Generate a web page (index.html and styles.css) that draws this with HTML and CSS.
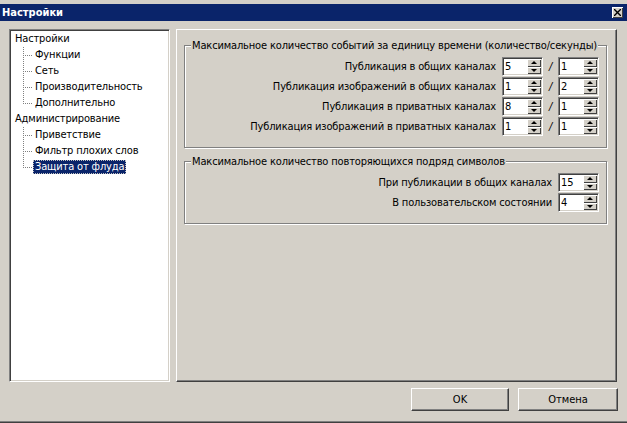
FILE: index.html
```html
<!DOCTYPE html>
<html>
<head>
<meta charset="utf-8">
<link rel="stylesheet" href="styles.css">
</head>
<body>
<div class="window">
  <div class="titlebar">
    <span class="title">Настройки</span>
    <span class="close"><svg width="7" height="7" viewBox="0 0 7 7"><path d="M0 0L7 7M7 0L0 7" stroke="#000" stroke-width="1.4"/></svg></span>
  </div>
  <div class="main">
    <div class="tree">
      <div class="node root"><span class="lbl">Настройки</span></div>
      <div class="children">
        <div class="node child"><span class="lbl">Функции</span></div>
        <div class="node child"><span class="lbl">Сеть</span></div>
        <div class="node child"><span class="lbl">Производительность</span></div>
        <div class="node child last"><span class="lbl">Дополнительно</span></div>
      </div>
      <div class="node root"><span class="lbl">Администрирование</span></div>
      <div class="children">
        <div class="node child"><span class="lbl">Приветствие</span></div>
        <div class="node child"><span class="lbl">Фильтр плохих слов</span></div>
        <div class="node child last"><span class="lbl selected">Защита от флуда</span></div>
      </div>
    </div>
    <div class="panel">
      <fieldset class="group group1">
        <legend>Максимальное количество событий за единицу времени (количество/секунды)</legend>
        <div class="rows">
          <div class="row">
            <span class="label">Публикация в общих каналах</span>
            <div class="spin"><span class="val">5</span><div class="arrows"><span class="ab up"></span><span class="ab down"></span></div></div>
            <span class="slash">/</span>
            <div class="spin"><span class="val">1</span><div class="arrows"><span class="ab up"></span><span class="ab down"></span></div></div>
          </div>
          <div class="row">
            <span class="label">Публикация изображений в общих каналах</span>
            <div class="spin"><span class="val">1</span><div class="arrows"><span class="ab up"></span><span class="ab down"></span></div></div>
            <span class="slash">/</span>
            <div class="spin"><span class="val">2</span><div class="arrows"><span class="ab up"></span><span class="ab down"></span></div></div>
          </div>
          <div class="row">
            <span class="label">Публикация в приватных каналах</span>
            <div class="spin"><span class="val">8</span><div class="arrows"><span class="ab up"></span><span class="ab down"></span></div></div>
            <span class="slash">/</span>
            <div class="spin"><span class="val">1</span><div class="arrows"><span class="ab up"></span><span class="ab down"></span></div></div>
          </div>
          <div class="row">
            <span class="label">Публикация изображений в приватных каналах</span>
            <div class="spin"><span class="val">1</span><div class="arrows"><span class="ab up"></span><span class="ab down"></span></div></div>
            <span class="slash">/</span>
            <div class="spin"><span class="val">1</span><div class="arrows"><span class="ab up"></span><span class="ab down"></span></div></div>
          </div>
        </div>
      </fieldset>
      <fieldset class="group group2">
        <legend>Максимальное количество повторяющихся подряд символов</legend>
        <div class="rows">
          <div class="row">
            <span class="label">При публикации в общих каналах</span>
            <div class="spin"><span class="val">15</span><div class="arrows"><span class="ab up"></span><span class="ab down"></span></div></div>
          </div>
          <div class="row">
            <span class="label">В пользовательском состоянии</span>
            <div class="spin"><span class="val">4</span><div class="arrows"><span class="ab up"></span><span class="ab down"></span></div></div>
          </div>
        </div>
      </fieldset>
    </div>
  </div>
  <div class="buttons">
    <button class="btn ok">OK</button>
    <button class="btn cancel">Отмена</button>
  </div>
</div>
</body>
</html>
```
FILE: styles.css
```css
* { box-sizing: border-box; }
html, body { margin: 0; padding: 0; }
body {
  width: 627px;
  height: 423px;
  overflow: hidden;
  background: #d4d0c8;
  font-family: "DejaVu Sans Condensed", "DejaVu Sans", "Liberation Sans", sans-serif;
  font-size: 11px;
  letter-spacing: -0.15px;
  color: #000;
}
.window {
  width: 627px;
  height: 423px;
  background: #d4d0c8;
  display: flex;
  flex-direction: column;
  box-shadow: inset 0 -1px 0 #404040, inset 0 -2px 0 #808080;
}
.titlebar {
  margin-top: 4px;
  height: 17px;
  background: #0a246a;
  display: flex;
  align-items: center;
  justify-content: space-between;
  padding-left: 2px;
  padding-right: 4px;
}
.title {
  color: #fff;
  font-weight: bold;
  font-size: 11px;
  letter-spacing: 0;
  line-height: 17px;
}
.close {
  width: 11px;
  height: 11px;
  background: #d4d0c8;
  display: flex;
  align-items: center;
  justify-content: center;
  box-shadow: inset 1px 1px 0 #fff, inset -1px -1px 0 #404040;
}
.main {
  margin-top: 8px;
  height: 353px;
  display: flex;
  gap: 6px;
  padding: 0 10px 0 9px;
}
.tree {
  width: 161px;
  flex-shrink: 0;
  background: #fff;
  border: 1px solid;
  border-color: #808080 #fff #fff #808080;
  box-shadow: inset 1px 1px 0 #404040, inset -1px -1px 0 #d4d0c8;
  padding: 1px 1px 0 1px;
}
.node {
  height: 16px;
  display: flex;
  align-items: center;
  white-space: nowrap;
}
.root { padding-left: 2px; }
.child {
  padding-left: 22px;
  background:
    repeating-linear-gradient(to bottom, #808080 0 1px, transparent 1px 2px) 12px 0 / 1px 100% no-repeat,
    repeating-linear-gradient(to right, #808080 0 1px, transparent 1px 2px) 12px 8px / 9px 1px no-repeat;
}
.child.last {
  background:
    repeating-linear-gradient(to bottom, #808080 0 1px, transparent 1px 2px) 12px 0 / 1px 9px no-repeat,
    repeating-linear-gradient(to right, #808080 0 1px, transparent 1px 2px) 12px 8px / 9px 1px no-repeat;
}
.lbl {
  padding: 0 2px;
  line-height: 14px;
  height: 14px;
  display: inline-block;
}
.lbl.selected {
  background: #0a246a;
  color: #fff;
  outline: 1px dotted #c0c0c0;
  outline-offset: -1px;
}
.panel {
  flex: 1;
  min-width: 0;
  border: 1px solid;
  border-color: #fff #404040 #404040 #fff;
  box-shadow: inset -1px -1px 0 #808080;
  padding: 9px 9px 0 7px;
}
.group {
  margin: 0;
  padding: 0 7px 11px 0;
  border: 1px solid #808080;
  box-shadow: 1px 1px 0 #fff, inset 1px 1px 0 #fff;
  min-width: 0;
}
.group2 { margin-top: 7px; padding-bottom: 11px; }
legend {
  margin-left: 6px;
  padding: 0 1px;
  line-height: 13px;
  background: #d4d0c8;
  white-space: nowrap;
}
.rows {
  padding-top: 5px;
  display: flex;
  flex-direction: column;
  gap: 1px;
}
.row {
  height: 19px;
  display: flex;
  align-items: center;
  justify-content: flex-end;
}
.label {
  margin-right: 6px;
  white-space: nowrap;
}
.slash {
  width: 15px;
  text-align: center;
  font-style: italic;
}
.spin {
  width: 41px;
  height: 19px;
  flex-shrink: 0;
  background: #fff;
  border: 1px solid;
  border-color: #808080 #fff #fff #808080;
  box-shadow: inset 1px 1px 0 #404040, inset -1px -1px 0 #d4d0c8;
  padding: 1px;
  display: flex;
}
.val {
  flex: 1;
  padding-left: 1px;
  line-height: 15px;
}
.arrows {
  width: 14px;
  display: flex;
  flex-direction: column;
}
.ab {
  flex: 1;
  background: #d4d0c8;
  box-shadow: inset 1px 1px 0 #fff, inset -1px -1px 0 #404040;
  display: flex;
  align-items: center;
  justify-content: center;
}
.ab::after {
  content: "";
  width: 0;
  height: 0;
  border-left: 3px solid transparent;
  border-right: 3px solid transparent;
}
.up::after { border-bottom: 3px solid #000; }
.down::after { border-top: 3px solid #000; }
.buttons {
  margin-top: 6px;
  height: 23px;
  display: flex;
  justify-content: flex-end;
  gap: 9px;
  padding-right: 9px;
}
.btn {
  font-family: inherit;
  font-size: 11px;
  letter-spacing: 0;
  color: #000;
  background: #d4d0c8;
  height: 23px;
  padding: 0;
  border: 1px solid;
  border-color: #fff #404040 #404040 #fff;
  box-shadow: inset -1px -1px 0 #808080;
  border-radius: 0;
}
.ok { width: 98px; }
.cancel { width: 100px; }
```
